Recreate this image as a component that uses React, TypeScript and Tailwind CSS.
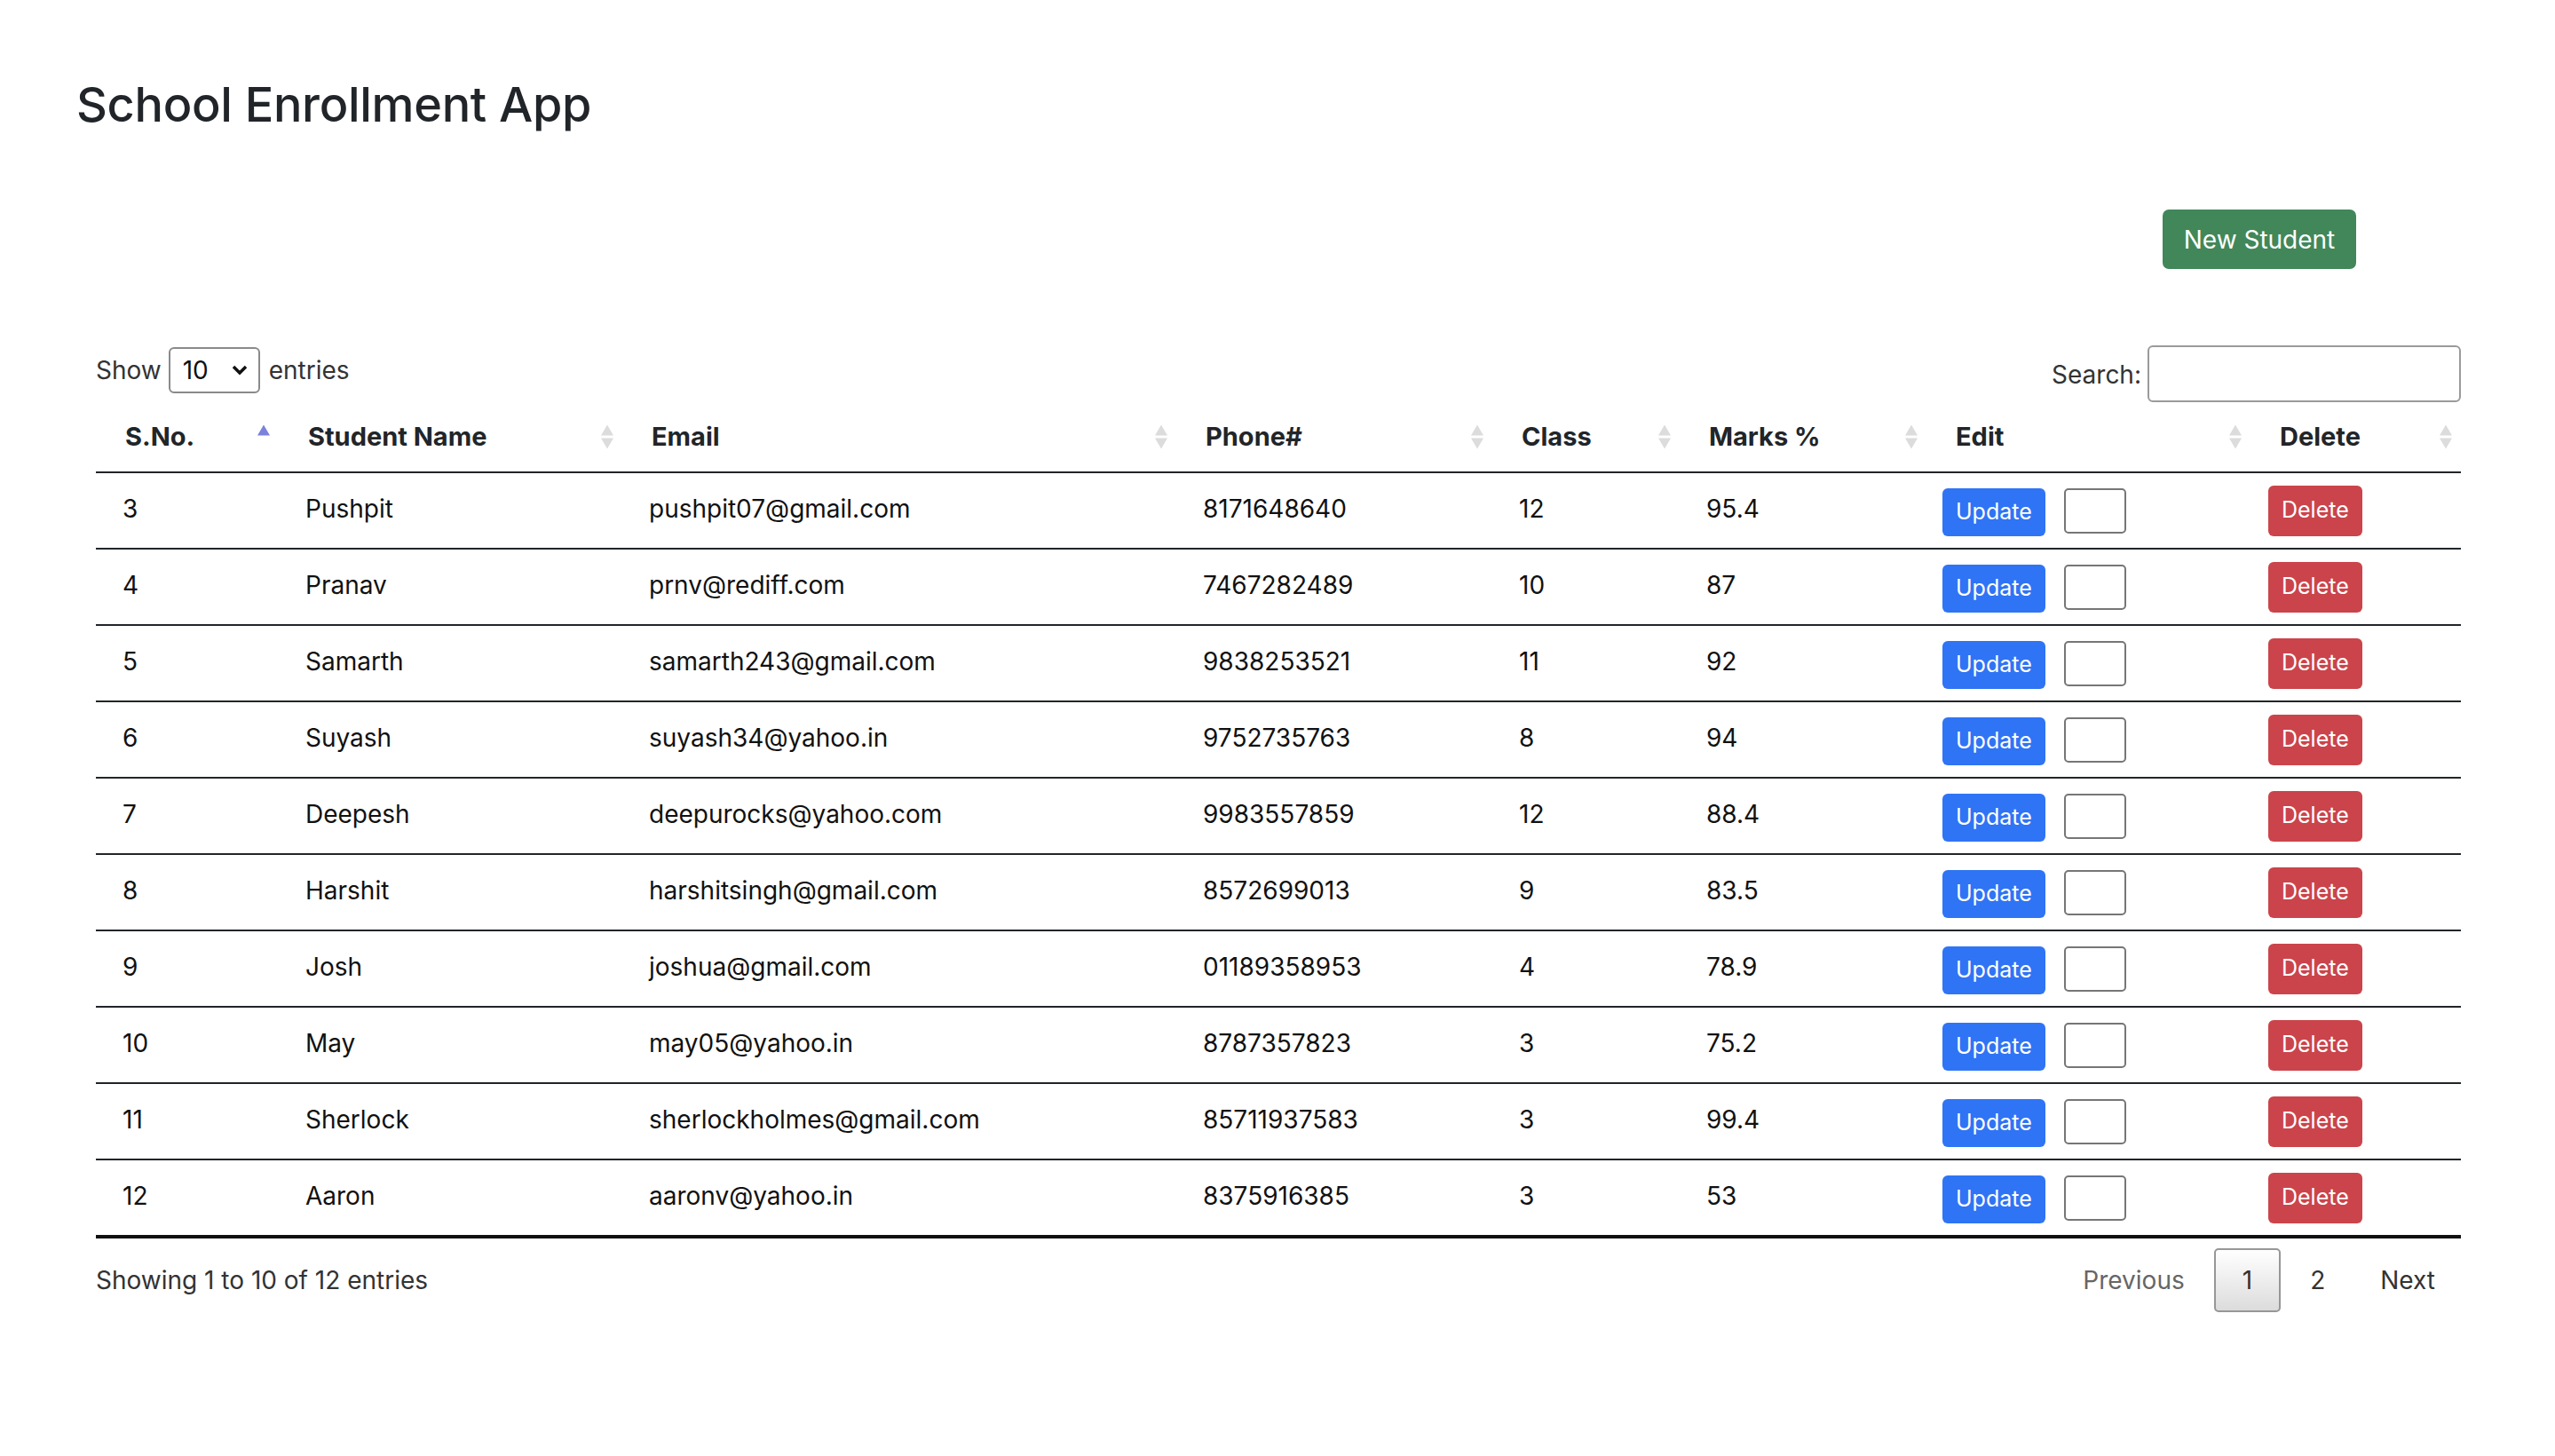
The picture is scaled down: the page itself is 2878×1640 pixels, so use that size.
import React from "react";

type Row = {
  sno: string;
  name: string;
  email: string;
  phone: string;
  cls: string;
  marks: string;
};

const rows: Row[] = [
  { sno: "3", name: "Pushpit", email: "pushpit07@gmail.com", phone: "8171648640", cls: "12", marks: "95.4" },
  { sno: "4", name: "Pranav", email: "prnv@rediff.com", phone: "7467282489", cls: "10", marks: "87" },
  { sno: "5", name: "Samarth", email: "samarth243@gmail.com", phone: "9838253521", cls: "11", marks: "92" },
  { sno: "6", name: "Suyash", email: "suyash34@yahoo.in", phone: "9752735763", cls: "8", marks: "94" },
  { sno: "7", name: "Deepesh", email: "deepurocks@yahoo.com", phone: "9983557859", cls: "12", marks: "88.4" },
  { sno: "8", name: "Harshit", email: "harshitsingh@gmail.com", phone: "8572699013", cls: "9", marks: "83.5" },
  { sno: "9", name: "Josh", email: "joshua@gmail.com", phone: "01189358953", cls: "4", marks: "78.9" },
  { sno: "10", name: "May", email: "may05@yahoo.in", phone: "8787357823", cls: "3", marks: "75.2" },
  { sno: "11", name: "Sherlock", email: "sherlockholmes@gmail.com", phone: "85711937583", cls: "3", marks: "99.4" },
  { sno: "12", name: "Aaron", email: "aaronv@yahoo.in", phone: "8375916385", cls: "3", marks: "53" },
];

const GRID = "grid grid-cols-[206px_387px_624px_356px_211px_278px_365px_237px]";

function SortBoth() {
  return (
    <svg className="absolute right-[10px] top-1/2 -translate-y-1/2" width="14" height="27" viewBox="0 0 14 27">
      <polygon points="7,0 14,12 0,12" fill="#dcdcdc" />
      <polygon points="0,15 14,15 7,27" fill="#dcdcdc" />
    </svg>
  );
}

function SortAsc() {
  return (
    <svg className="absolute right-[10px] top-1/2 -translate-y-1/2" width="14" height="27" viewBox="0 0 14 27">
      <polygon points="7,0 14,12 0,12" fill="#7b82dc" />
    </svg>
  );
}

function HeadCell({ label, active }: { label: string; active?: boolean }) {
  return (
    <div className="relative flex items-center pl-[33px] h-full">
      <span className="font-bold text-[29px] text-[#212529]">{label}</span>
      {active ? <SortAsc /> : <SortBoth />}
    </div>
  );
}

function Cell({ children }: { children: React.ReactNode }) {
  return <div className="flex items-center pl-[30px] pb-[4px] text-[28px] text-[#111]">{children}</div>;
}

export default function App() {
  return (
    <div className="min-h-screen bg-white font-['Inter','Noto_Sans',sans-serif] text-[#212529]">
      <div className="px-[86px] pt-[85px]">
        <h1 className="text-[54px] leading-[66px] font-medium text-[#212529] tracking-[-0.3px]">
          School Enrollment App
        </h1>

        <div className="flex justify-end pr-[138px] mt-[85px]">
          <button className="w-[218px] h-[67px] rounded-[7px] bg-[#41875a] text-white text-[28px] flex items-center justify-center">
            New Student
          </button>
        </div>

        <div className="ml-[22px] mr-[20px] mt-[86px]">
          {/* controls */}
          <div className="flex justify-between items-start h-[64px]">
            <div className="flex items-center mt-[2px] text-[28px] text-[#333]">
              <span>Show</span>
              <div className="ml-[8px] mr-[10px] w-[103px] h-[52px] border-2 border-[#8a8a8a] rounded-[6px] flex items-center justify-between pl-[14px] pr-[12px] text-[#111]">
                <span>10</span>
                <svg width="18" height="12" viewBox="0 0 18 12">
                  <polyline points="2,2 9,9 16,2" fill="none" stroke="#111" strokeWidth="3.5" />
                </svg>
              </div>
              <span>entries</span>
            </div>
            <div className="flex items-center h-[64px] text-[28px] text-[#333]">
              <span className="mr-[7px] mt-[2px]">Search:</span>
              <div className="w-[353px] h-[64px] border-2 border-[#9a9a9a] rounded-[6px] bg-white" />
            </div>
          </div>

          {/* table header */}
          <div className={`${GRID} h-[80px] border-b-2 border-[#212529]`}>
            <HeadCell label="S.No." active />
            <HeadCell label="Student Name" />
            <HeadCell label="Email" />
            <HeadCell label="Phone#" />
            <HeadCell label="Class" />
            <HeadCell label="Marks %" />
            <HeadCell label="Edit" />
            <HeadCell label="Delete" />
          </div>

          {/* rows */}
          {rows.map((r, i) => (
            <div
              key={r.sno}
              className={`${GRID} ${i === rows.length - 1 ? "h-[88px] border-b-4 border-[#111]" : "h-[86px] border-b-2 border-[#212529]"}`}
            >
              <Cell>{r.sno}</Cell>
              <Cell>{r.name}</Cell>
              <Cell>{r.email}</Cell>
              <Cell>{r.phone}</Cell>
              <Cell>{r.cls}</Cell>
              <Cell>{r.marks}</Cell>
              <div className="flex items-center pl-[18px]">
                <button className="h-[54px] mt-[4px] px-[15px] rounded-[6px] bg-[#2f74f5] text-white text-[25px] flex items-center">
                  Update
                </button>
                <div className="ml-[21px] w-[70px] h-[51px] border-2 border-[#767676] rounded-[5px] bg-white" />
              </div>
              <div className="flex items-center pl-[20px]">
                <button className="h-[57px] px-[15px] rounded-[6px] bg-[#cb444b] text-white text-[25px] flex items-center">
                  Delete
                </button>
              </div>
            </div>
          ))}

          {/* footer */}
          <div className="flex justify-between items-center mt-[11px] h-[72px]">
            <span className="text-[28px] text-[#333]">Showing 1 to 10 of 12 entries</span>
            <div className="flex items-center gap-[4px] text-[28px]">
              <span className="h-[72px] px-[29px] flex items-center text-[#666]">Previous</span>
              <span className="h-[72px] px-[30px] flex items-center text-[#333] border-2 border-[#979797] rounded-[5px] bg-gradient-to-b from-white to-[#dcdcdc]">
                1
              </span>
              <span className="h-[72px] px-[29px] flex items-center text-[#333]">2</span>
              <span className="h-[72px] px-[29px] flex items-center text-[#333]">Next</span>
            </div>
          </div>
        </div>
      </div>
    </div>
  );
}
